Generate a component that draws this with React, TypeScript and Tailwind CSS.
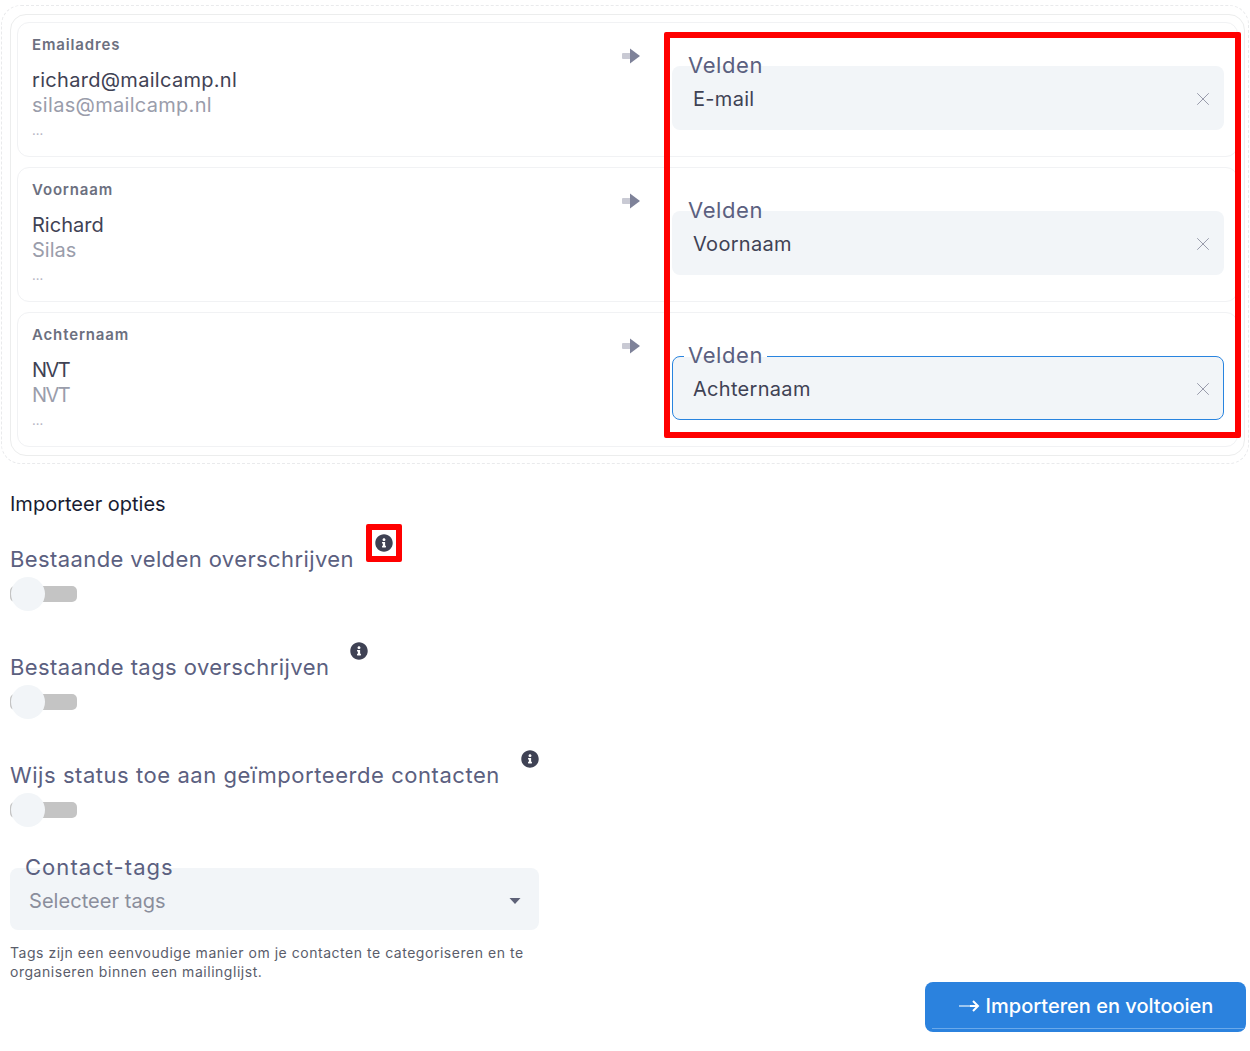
import { X } from "lucide-react";
import { FaInfoCircle } from "react-icons/fa";

const FONT = "font-['Inter','Noto_Sans',sans-serif]";

const ROWS = [
  { title: "Emailadres", first: "richard@mailcamp.nl", second: "silas@mailcamp.nl", field: "E-mail", focused: false, tracking: "tracking-[0.3px]" },
  { title: "Voornaam", first: "Richard", second: "Silas", field: "Voornaam", focused: false, tracking: "tracking-[0px]" },
  { title: "Achternaam", first: "NVT", second: "NVT", field: "Achternaam", focused: true, tracking: "tracking-[-1.5px]" },
];

const OPTIONS = [
  { label: "Bestaande velden overschrijven", tracking: "tracking-[0.4px]" },
  { label: "Bestaande tags overschrijven", tracking: "tracking-[0.43px]" },
  { label: "Wijs status toe aan geïmporteerde contacten", tracking: "tracking-[0.55px]" },
];

function DuoArrow() {
  return (
    <svg width="18" height="16" viewBox="0 0 18 16" className="block">
      <rect x="0" y="5" width="9" height="6" rx="1" fill="#c9cad4" />
      <path d="M8 0.5 L18 8 L8 15.5 Z" fill="#7e8299" />
    </svg>
  );
}

function FieldSelect({ field, focused }: { field: string; focused: boolean }) {
  return (
    <div className="relative h-[64px] w-[552px]">
      <div
        className={`flex h-full items-center justify-between rounded-lg bg-[#f2f5f8] pt-[2px] ${
          focused ? "border border-[#2884df] pl-[20px] pr-[9px]" : "pl-[21px] pr-[10px]"
        }`}
      >
        <span className="text-[20px] leading-none tracking-[0.3px] text-[#3f4254]">{field}</span>
        <X size={22} strokeWidth={0.9} className="text-[#85889a]" />
      </div>
      {focused && <span className="absolute left-[12px] top-0 h-[1px] w-[83px] bg-white" />}
      <span className="absolute left-[16px] top-[-15px] text-[22px] leading-[28px] tracking-[0.6px] text-[#5b6080]">
        Velden
      </span>
    </div>
  );
}

function MappingRow({ title, first, second, field, focused, tracking }: (typeof ROWS)[number]) {
  return (
    <div className="flex h-[135px] rounded-xl border border-[#f1f2f4]">
      <div className="w-[590px] pl-[14px] pt-[12px]">
        <div className="text-[15px] font-semibold leading-[20px] tracking-[0.85px] text-[#6c7080]">{title}</div>
        <div className={`mt-[13px] text-[20px] leading-[25px] text-[#3f4254] ${tracking}`}>{first}</div>
        <div className={`text-[20px] leading-[25px] text-[#9a9dab] ${tracking}`}>{second}</div>
        <div className="mt-[2px] text-[13px] leading-[20px] text-[#b5b5c3]">...</div>
      </div>
      <div className="w-[64px] pl-[14px] pt-[25px]">
        <DuoArrow />
      </div>
      <div className="pt-[43px]">
        <FieldSelect field={field} focused={focused} />
      </div>
    </div>
  );
}

function OptionToggle({ label, tracking }: { label: string; tracking: string }) {
  return (
    <div className="h-[108px]">
      <div className="flex items-start">
        <span className={`mt-[11px] text-[22px] leading-[28px] text-[#5b6080] ${tracking}`}>{label}</span>
        <FaInfoCircle size={18} className="ml-[21px] shrink-0 text-[#3f4254]" />
      </div>
      <div className="relative mt-[4px] flex h-[34px] w-[67px] items-center">
        <div className="h-[16px] w-[67px] rounded-[5px] bg-[#c4c4c4]" />
        <div className="absolute left-[1px] top-0 h-[34px] w-[34px] rounded-full bg-[#f2f5f8]" />
      </div>
    </div>
  );
}

export default function App() {
  return (
    <div className={`relative h-[1051px] w-[1250px] overflow-hidden bg-white ${FONT}`}>
      <div className="pt-[5px] pl-[1px]">
        <div className="h-[459px] w-[1248px] rounded-[20px] border border-dashed border-[#e9eaec] pl-[8px] pt-[8px]">
          <div className="h-[442px] w-[1235px] rounded-[16px] border border-[#eceded] pl-[6px] pt-[7px]">
            <div className="flex w-[1221px] flex-col gap-[10px]">
              {ROWS.map((row) => (
                <MappingRow key={row.title} {...row} />
              ))}
            </div>
          </div>
        </div>
      </div>

      <div className="pl-[10px]">
        <div className="mt-[26px] text-[20px] leading-[28px] text-[#181c32]">Importeer opties</div>
        <div className="mt-[16px]">
          {OPTIONS.map((option) => (
            <OptionToggle key={option.label} {...option} />
          ))}
        </div>

        <div className="relative mt-[10px] w-[529px]">
          <div className="flex h-[62px] items-center justify-between rounded-lg bg-[#f2f5f8] pl-[19px] pr-[18px] pt-[4px]">
            <span className="text-[20px] leading-none tracking-[0.05px] text-[#8b8e9c]">Selecteer tags</span>
            <svg width="12" height="6" viewBox="0 0 12 6">
              <path d="M0.5 0 H11.5 L6 6 Z" fill="#5e6278" />
            </svg>
          </div>
          <span className="absolute left-[15px] top-[-15px] text-[22px] leading-[28px] tracking-[1.05px] text-[#5b6080]">
            Contact-tags
          </span>
        </div>
        <p className="mt-[13px] w-[529px] text-[14px] leading-[19px] tracking-[0.53px] text-[#5a5d6b]">
          Tags zijn een eenvoudige manier om je contacten te categoriseren en te organiseren binnen een mailinglijst.
        </p>
      </div>

      <div className="absolute left-[925px] top-[982px] flex h-[50px] w-[321px] items-center justify-center gap-[6px] rounded-lg bg-[#2b82de] pb-[2px]">
        <svg width="22" height="14" viewBox="0 0 22 14" fill="none">
          <path d="M1 7 H12" stroke="#9cc6f0" strokeWidth="2" />
          <path d="M12 7 H20 M15 2 L20 7 L15 12" stroke="#ffffff" strokeWidth="2" />
        </svg>
        <span className="text-[20px] font-medium leading-none text-white">Importeren en voltooien</span>
        <span className="absolute bottom-[3px] left-[7px] right-[1px] h-[1px] bg-[#6aa9ea]" />
      </div>

      {/* red annotation boxes from the screenshot */}
      <div className="absolute left-[664px] top-[32px] h-[406px] w-[577px] rounded-[2px] border-[6px] border-[#ff0000]" />
      <div className="absolute left-[366px] top-[524px] h-[38px] w-[36px] rounded-[2px] border-[6px] border-[#ff0000]" />
    </div>
  );
}
